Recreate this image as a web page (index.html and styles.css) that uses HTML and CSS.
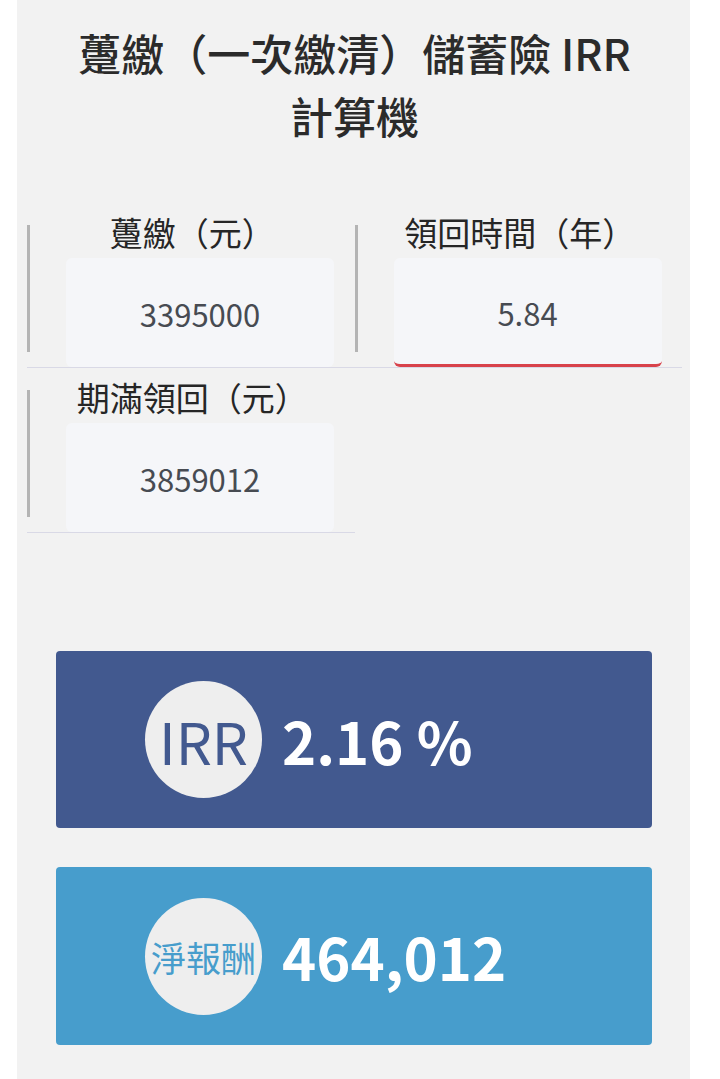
FILE: index.html
```html
<!DOCTYPE html>
<html lang="zh-Hant">
<head>
    <meta charset="UTF-8">
    <meta name="viewport" content="width=device-width, initial-scale=1.0">
    <title>躉繳（一次繳清）儲蓄險 IRR 計算機</title>
    <link rel="stylesheet" href="styles.css">
</head>
<body>
<main class="page">
    <h1 class="title">躉繳（一次繳清）儲蓄險 IRR<br>計算機</h1>

    <form class="calc-form">
        <div class="cell">
            <div class="field">
                <label for="premium">躉繳（元）</label>
                <input class="num-input" type="text" id="premium" value="3395000">
            </div>
        </div>
        <div class="cell">
            <div class="field">
                <label for="years">領回時間（年）</label>
                <input class="num-input is-active" type="text" id="years" value="5.84">
            </div>
        </div>
        <div class="cell">
            <div class="field">
                <label for="maturity">期滿領回（元）</label>
                <input class="num-input" type="text" id="maturity" value="3859012">
            </div>
        </div>
    </form>

    <section class="result result-irr">
        <div class="badge">IRR</div>
        <div class="value">2.16 %</div>
    </section>

    <section class="result result-net">
        <div class="badge badge-cjk">淨報酬</div>
        <div class="value">464,012</div>
    </section>
</main>
</body>
</html>
```

FILE: styles.css
```css
body {
    margin: 0;
    background: #ffffff;
    font-family: "Noto Sans CJK TC", "Noto Sans", sans-serif;
    color: #2b2b2b;
}

.page {
    width: 655px;
    min-height: 1079px;
    margin-left: 17px;
    padding: 0 8px 0 10px;
    background: #f2f2f2;
    overflow: hidden;
}

.title {
    margin: 21px 0 0;
    font-size: 43px;
    line-height: 63px;
    font-weight: 500;
    text-align: center;
    color: #2b2b2b;
}

.calc-form {
    display: grid;
    grid-template-columns: 1fr 1fr;
    margin-top: 56px;
}

.cell {
    padding: 22px 0 15px;
    border-bottom: 1px solid #d9d9e6;
}

.field {
    display: flex;
    flex-direction: column;
    border-left: 3px solid #b4b4b4;
}

.field label {
    display: block;
    height: 20px;
    margin: -3px 0 16px;
    font-size: 33px;
    line-height: 20px;
    text-align: center;
    color: #262626;
}

.num-input {
    box-sizing: border-box;
    width: 268px;
    height: 109px;
    margin: 0 0 -15px 36px;
    padding: 2px 0 0;
    border: none;
    border-radius: 6px;
    background: #f5f6f9;
    font-family: inherit;
    font-size: 31px;
    text-align: center;
    color: #474b52;
    outline: none;
}

.num-input.is-active {
    border-bottom: 3px solid #d8424b;
}

.result {
    display: flex;
    align-items: center;
    width: 596px;
    height: 177px;
    margin-left: 29px;
    padding-left: 89px;
    box-sizing: border-box;
    border-radius: 4px;
    color: #ffffff;
}

.result-irr {
    margin-top: 118px;
    background: #42598f;
}

.result-net {
    margin-top: 39px;
    height: 178px;
    background: #479dcc;
}

.badge {
    display: flex;
    align-items: center;
    justify-content: center;
    width: 117px;
    height: 117px;
    border-radius: 50%;
    background: #eeeeee;
    font-size: 57px;
    color: #42598f;
}

.badge-cjk {
    font-size: 35px;
    color: #479dcc;
}

.value {
    margin-left: 20px;
    font-size: 58px;
    font-weight: 700;
}
```
